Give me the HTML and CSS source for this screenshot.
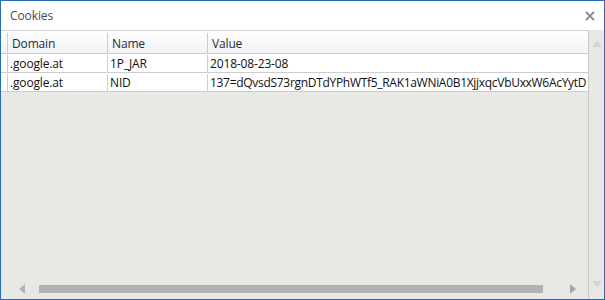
FILE: index.html
```html
<!DOCTYPE html>
<html>
<head>
<meta charset="utf-8">
<link rel="stylesheet" href="styles.css">
</head>
<body>
<div class="window">
  <div class="titlebar">
    <span class="title">Cookies</span>
    <svg class="close" width="10" height="10" viewBox="0 0 10 10"><path d="M1 1L9 9M9 1L1 9" stroke="#8a8a8a" stroke-width="1.8" fill="none"/></svg>
  </div>
  <div class="content">
    <div class="listview">
      <div class="row header">
        <div class="pad"></div>
        <div class="cell c1">Domain</div>
        <div class="cell c2">Name</div>
        <div class="cell c3">Value</div>
      </div>
      <div class="row item">
        <div class="pad"></div>
        <div class="cell c1">.google.at</div>
        <div class="cell c2">1P_JAR</div>
        <div class="cell c3">2018-08-23-08</div>
      </div>
      <div class="row item">
        <div class="pad"></div>
        <div class="cell c1">.google.at</div>
        <div class="cell c2">NID</div>
        <div class="cell c3 long">137=dQvsdS73rgnDTdYPhWTf5_RAK1aWNiA0B1XjjxqcVbUxxW6AcYytD</div>
      </div>
      <div class="spacer"></div>
      <div class="hscroll">
        <svg class="arrow" width="6" height="10" viewBox="0 0 6 10"><path d="M6 0V10L0 5Z" fill="#b4b4b4"/></svg>
        <div class="thumb"></div>
        <svg class="arrow" width="6" height="10" viewBox="0 0 6 10"><path d="M0 0V10L6 5Z" fill="#a6a6a6"/></svg>
      </div>
    </div>
    <div class="vscroll">
      <svg width="10" height="6" viewBox="0 0 10 6"><path d="M0 6H10L5 0Z" fill="#d4d4d2"/></svg>
      <svg width="10" height="6" viewBox="0 0 10 6"><path d="M0 0H10L5 6Z" fill="#d4d4d2"/></svg>
    </div>
  </div>
</div>
</body>
</html>
```
FILE: styles.css
```css
* { box-sizing: border-box; }
html, body { margin: 0; padding: 0; }
body {
  font-family: "Open Sans", "Noto Sans", sans-serif;
  font-size: 12px;
  width: 605px;
  height: 300px;
  overflow: hidden;
}
.window {
  width: 605px;
  height: 300px;
  border: 1px solid #2a6ab6;
  display: flex;
  flex-direction: column;
  background: #e8e8e4;
}
.titlebar {
  height: 29px;
  flex: none;
  background: #fff;
  display: flex;
  align-items: center;
  justify-content: space-between;
  padding: 0 9px 0 9px;
}
.title {
  color: #4a4a4a;
  font-size: 12px;
  letter-spacing: -0.1px;
}
.content {
  flex: 1;
  display: flex;
  min-height: 0;
}
.listview {
  width: 587px;
  flex: none;
  display: flex;
  flex-direction: column;
  overflow: hidden;
}
.row {
  display: flex;
  white-space: nowrap;
  border-bottom: 1px solid #cdcdcd;
  letter-spacing: -0.15px;
}
.header {
  height: 24px;
  border-top: 1px solid #d2d2d2;
  background: linear-gradient(#ffffff, #f1f2f4);
  color: #1e2a3a;
  padding-top: 2px;
}
.item {
  height: 19px;
  background: #fff;
  color: #111;
  padding-top: 1px;
}
.pad { width: 6px; flex: none; }
.cell {
  flex: none;
  border-left: 1px solid #cdcdcd;
  display: flex;
  align-items: center;
  overflow: hidden;
}
.header .cell { padding-left: 4px; }
.item .cell { padding-left: 2px; }
.c1, .c2 { width: 100px; }
.c3 { width: 380px; }
.long { letter-spacing: -0.3px; }
.spacer { flex: 1; }
.hscroll {
  height: 17px;
  flex: none;
  display: flex;
  align-items: center;
  padding: 0 12px 3px 18px;
}
.thumb {
  height: 8px;
  background: #b2b2b2;
  width: 505px;
  margin: 0 27px 0 14px;
}
.vscroll {
  flex: 1;
  border-left: 1px solid #c6c6c6;
  display: flex;
  flex-direction: column;
  justify-content: space-between;
  align-items: center;
  padding: 11px 0 12px 0;
}
```
